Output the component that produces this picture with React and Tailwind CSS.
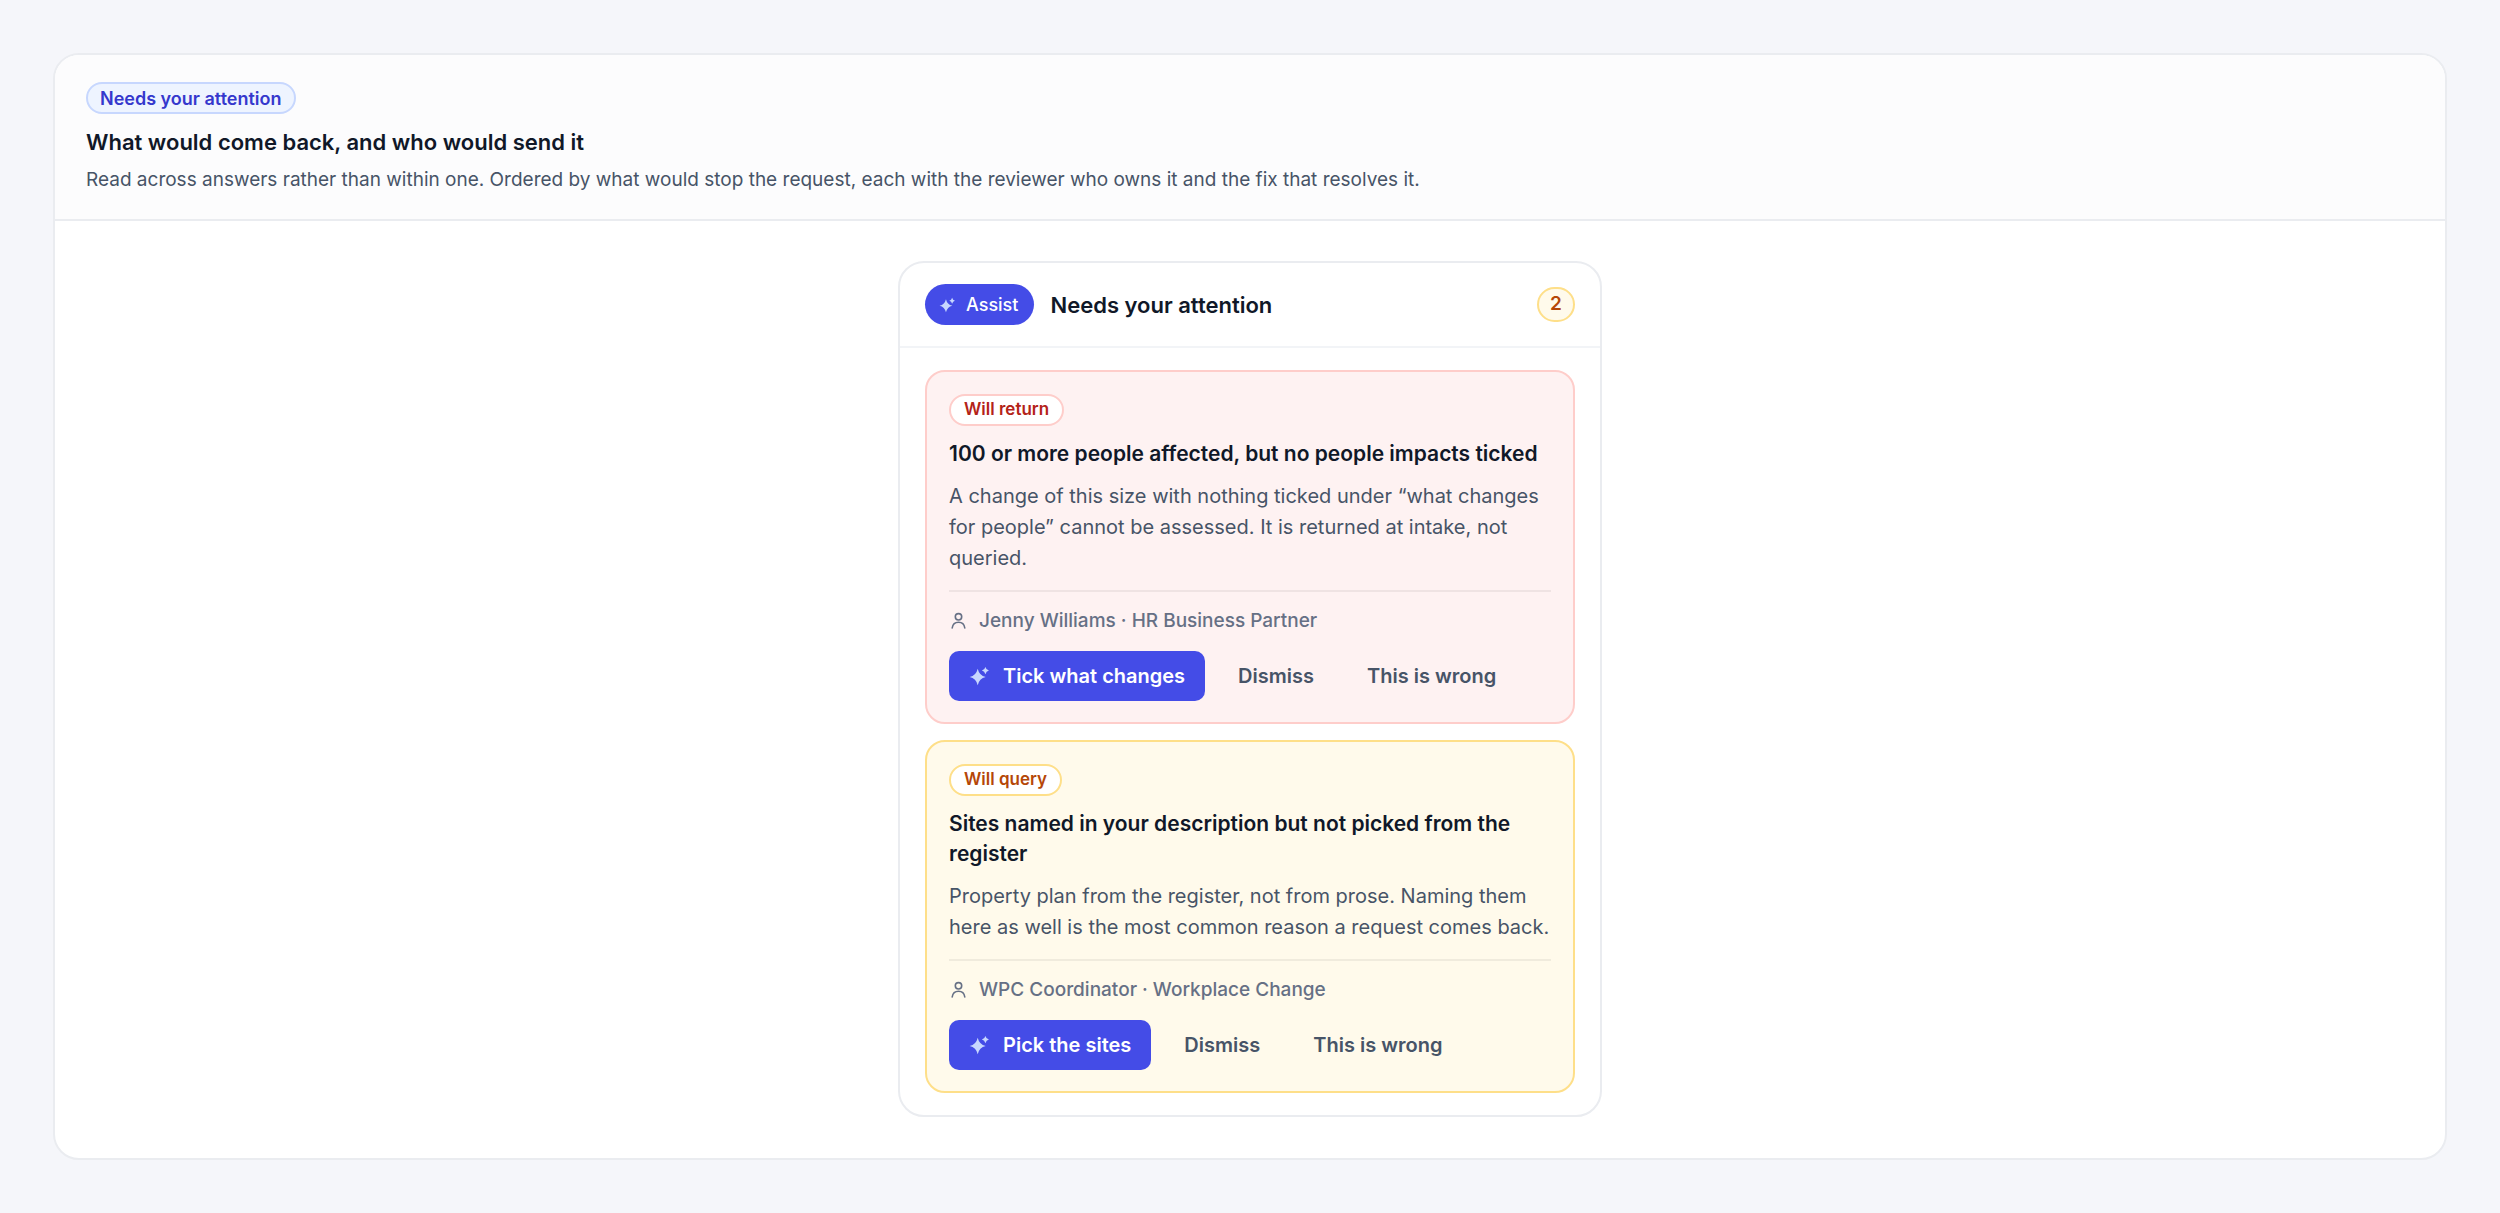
function Sparkle({ className }) {
  return (
    <svg viewBox="0 0 20 20" className={className} fill="#c7d7fe" aria-hidden="true">
      <path d="M8.7 2.800 Q10.200 9.500 16.700 11 Q10.200 12.500 8.700 19.200 Q7.200 12.500 0.700 11 Q7.200 9.500 8.700 2.800Z" />
      <path d="M16.4 0.900 Q17.200 3.900 19.900 4.600 Q17.200 5.300 16.400 8.300 Q15.600 5.300 12.900 4.600 Q15.600 3.900 16.400 0.900Z" />
    </svg>
  );
}

function Person() {
  return (
    <svg viewBox="0 0 20 20" className="size-5 shrink-0" fill="none" stroke="#667085" strokeWidth="1.6" strokeLinecap="round" aria-hidden="true">
      <circle cx="9.500" cy="5.800" r="3.200" />
      <path d="M3.200 17c.5-3.600 2.900-5.800 6.300-5.800s5.800 2.200 6.300 5.800" />
    </svg>
  );
}

const tones = {
  red: { card: "border-[#fecdca] bg-[#fef2f2]", pill: "border-[#fecdca] text-[#b42318]" },
  amber: { card: "border-[#fedf89] bg-[#fffaeb]", pill: "border-[#fedf89] text-[#b54708]" },
};

const findings = [
  {
    tone: "red",
    label: "Will return",
    title: "100 or more people affected, but no people impacts ticked",
    body: "A change of this size with nothing ticked under “what changes for people” cannot be assessed. It is returned at intake, not queried.",
    owner: "Jenny Williams · HR Business Partner",
    action: "Tick what changes",
  },
  {
    tone: "amber",
    label: "Will query",
    title: "Sites named in your description but not picked from the register",
    body: "Property plan from the register, not from prose. Naming them here as well is the most common reason a request comes back.",
    owner: "WPC Coordinator · Workplace Change",
    action: "Pick the sites",
  },
];

function Finding({ tone, label, title, body, owner, action }) {
  const t = tones[tone];
  const quiet = "h-[50px] rounded-[10px] px-5 text-[20px] font-semibold text-[#475467]";
  return (
    <article className={`rounded-[20px] border-2 px-[22px] pt-[22px] pb-[21px] ${t.card}`}>
      <span className={`flex h-8 w-fit items-center rounded-full border-2 bg-white px-[13px] text-[17px] font-semibold ${t.pill}`}>
        {label}
      </span>
      <h3 className="mt-[13px] text-[21px] leading-[30px] font-semibold text-[#101828]">{title}</h3>
      <p className="mt-3 text-[20px] leading-[31px] text-[#475467]">{body}</p>
      <div className="mt-4 border-t-2 border-black/6 pt-[15px]">
        <p className="flex items-center gap-[10px] text-[19px] leading-7 font-medium text-[#667085]">
          <Person />
          {owner}
        </p>
        <div className="mt-4 flex gap-[13px]">
          <button className="flex h-[50px] items-center gap-[14px] rounded-[10px] bg-[#444ce7] px-5 text-[20px] font-semibold text-white">
            <Sparkle className="size-5 shrink-0" />
            {action}
          </button>
          <button className={quiet}>Dismiss</button>
          <button className={quiet}>This is wrong</button>
        </div>
      </div>
    </article>
  );
}

export default function App() {
  return (
    <div className="min-h-screen bg-[#f5f6fa] p-[53px] font-['Inter',sans-serif]">
      <section className="overflow-hidden rounded-[26px] border-2 border-[#eaecf0] bg-white">
        <header className="border-b-2 border-[#eaecf0] bg-[#fcfcfd] px-[31px] pt-[27px] pb-6">
          <span className="flex h-8 w-fit items-center rounded-full border-2 border-[#c7d7fe] bg-[#eef4ff] px-3 text-[18px] font-semibold text-[#3538cd]">
            Needs your attention
          </span>
          <h1 className="mt-3 text-[22px] leading-8 font-semibold text-[#101828]">What would come back, and who would send it</h1>
          <p className="mt-[7px] text-[19px] leading-[30px] text-[#475467]">
            Read across answers rather than within one. Ordered by what would stop the request, each with the reviewer who owns it and the fix that resolves it.
          </p>
        </header>
        <div className="px-10 pt-10 pb-[41px]">
          <div className="mx-auto max-w-[704px] rounded-[26px] border-2 border-[#eaecf0] bg-white">
            <div className="flex items-center border-b-2 border-[#f2f4f7] px-[25px] pt-[21px] pb-[21px]">
              <span className="flex h-[41px] items-center gap-[11px] rounded-full bg-[#444ce7] pr-4 pl-[14px] text-[18px] font-medium text-white">
                <Sparkle className="size-4 shrink-0" />
                Assist
              </span>
              <h2 className="ml-4 text-[22px] leading-8 font-semibold text-[#101828]">Needs your attention</h2>
              <span className="ml-auto flex h-[35px] w-[38px] items-center justify-center rounded-full border-2 border-[#fedf89] bg-[#fffaeb] text-[19px] font-semibold text-[#b54708]">
                2
              </span>
            </div>
            <div className="flex flex-col gap-4 px-[25px] py-[22px]">
              {findings.map((f) => (
                <Finding key={f.label} {...f} />
              ))}
            </div>
          </div>
        </div>
      </section>
    </div>
  );
}
